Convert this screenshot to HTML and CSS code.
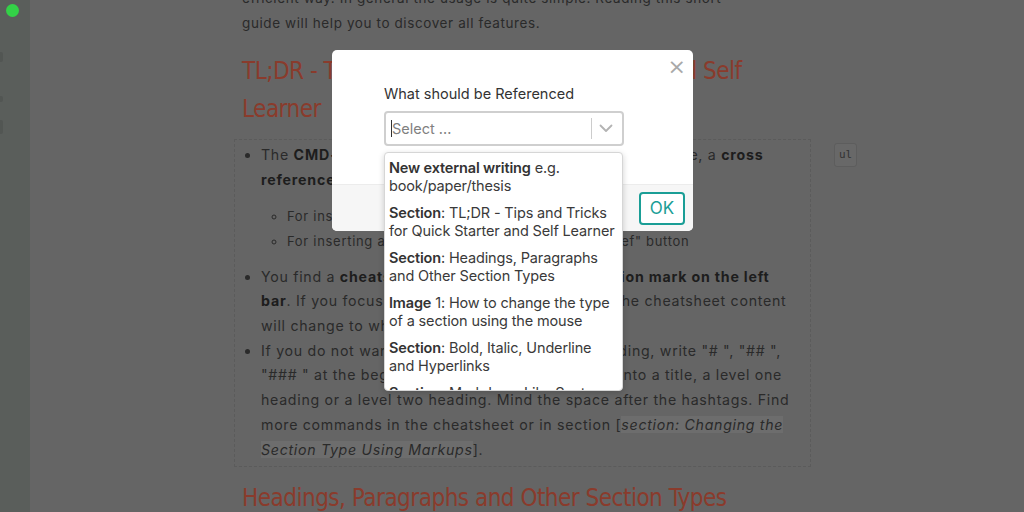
FILE: index.html
```html
<!DOCTYPE html>
<html lang="en">
<head>
<meta charset="utf-8">
<title>Editor - Insert Reference</title>
<link rel="stylesheet" href="styles.css">
</head>
<body>
<div class="app">
  <aside class="sidebar">
    <span class="status-dot"></span>
    <span class="side-mark m1"></span>
    <span class="side-mark m2"></span>
    <span class="side-mark m3"></span>
  </aside>
  <main class="main">
    <div class="doc">
      <p class="intro">efficient way. In general the usage is quite simple. Reading this short guide will help you to discover all features.</p>
      <h2 class="sec-title">TL;DR - Tips and Tricks for Quick Starter and Self Learner</h2>
      <div class="block-row">
        <div class="block">
          <ul class="bullets">
            <li>The <b>CMD+R</b> shortcut opens the dialog to insert a reference, a <b>cross reference</b> or a reference to a <b>book, paper, article</b>.
              <ul class="sub">
                <li>For inserting a cross reference use the "link" button</li>
                <li>For inserting a literature reference just use the "ref" button</li>
              </ul>
            </li>
            <li>You find a <b>cheatsheet behind the greyish question mark on the left bar</b>. If you focus on a specific section of a type the cheatsheet content will change to what is relevant for it.</li>
            <li>If you do not want to use the mouse to get a heading, write "# ", "## ", "### " at the beginning of a paragraph to turn it into a title, a level one heading or a level two heading. Mind the space after the hashtags. Find more commands in the cheatsheet or in section [<i class="xref">section: Changing the Section Type Using Markups</i>].</li>
          </ul>
        </div>
        <span class="type-badge">ul</span>
      </div>
      <h2 class="sec-title">Headings, Paragraphs and Other Section Types</h2>
    </div>
  </main>
</div>

<div class="modal">
  <button class="close" aria-label="Close">&#215;</button>
  <div class="modal-body">
    <label class="field-label">What should be Referenced</label>
    <div class="select">
      <span class="caret"></span><span class="placeholder">Select ...</span>
      <span class="sep"></span>
      <svg class="chev" width="14" height="9" viewBox="0 0 14 9"><path d="M1.5 1.5 L7 7 L12.5 1.5" fill="none" stroke="#b3b3b3" stroke-width="1.8" stroke-linecap="round" stroke-linejoin="round"/></svg>
    </div>
  </div>
  <div class="modal-footer">
    <button class="ok">OK</button>
  </div>
  <div class="menu">
    <div class="opt"><b>New external writing</b> e.g. book/paper/thesis</div>
    <div class="opt"><b>Section</b>: TL;DR - Tips and Tricks for Quick Starter and Self Learner</div>
    <div class="opt"><b>Section</b>: Headings, Paragraphs and Other Section Types</div>
    <div class="opt"><b>Image</b> 1: How to change the type of a section using the mouse</div>
    <div class="opt"><b>Section</b>: Bold, Italic, Underline and Hyperlinks</div>
    <div class="opt"><b>Section</b>: Markdown Like Syntax</div>
  </div>
</div>
</body>
</html>
```
FILE: styles.css
```css
* { box-sizing: border-box; }
html, body { margin: 0; height: 100%; overflow: hidden; }
body { font-family: Inter, "Open Sans", sans-serif; background: #656565; }

.app { display: flex; height: 512px; }
.sidebar { width: 30px; flex: none; background: #5a5e5b; position: relative; }
.status-dot { position: absolute; left: 6px; top: 4px; width: 13px; height: 13px; border-radius: 50%; background: #33d147; }
.side-mark { position: absolute; left: 0; width: 3px; background: #525653; border-radius: 0 2px 2px 0; }
.m1 { top: 52px; height: 10px; }
.m2 { top: 96px; height: 6px; }
.m3 { top: 120px; height: 14px; }

.main { flex: 1; padding-left: 212px; }
.doc { width: 570px; margin-top: -14px; }

.intro { margin: 0; width: 500px; font-size: 13.5px; line-height: 24.6px; letter-spacing: 0.6px; color: #2a2a2a; }

.sec-title {
  margin: 17px 0 11px;
  font-family: "DejaVu Sans Condensed", "DejaVu Sans", sans-serif;
  font-weight: normal; font-size: 24px; line-height: 38px; letter-spacing: -0.5px;
  color: #8a3b2c; width: 530px;
}

.block-row { display: flex; align-items: flex-start; gap: 23px; width: 624px; margin-left: -8px; }
.block { width: 577px; flex: none; border: 1px dashed #5b5b5b; padding: 3px 12px 4px 8px; }
.bullets { margin: 0; padding-left: 18px; font-size: 14.2px; line-height: 24.7px; letter-spacing: 0.7px; color: #2a2a2a; }
.bullets b { color: #1d1d1d; font-weight: 700; letter-spacing: 0.8px; }
.sub { margin: 11px 0 11px; padding-left: 26px; list-style: circle; font-size: 13px; line-height: 25px; letter-spacing: 0.7px; }
.xref { background: #6d6d6d; color: #2a2a2a; }
.type-badge { margin-top: 4px; font-family: "DejaVu Sans Mono", monospace; font-size: 11px; color: #333; background: #686868; border: 1px solid #5d5d5d; border-radius: 3px; padding: 5px 4px; line-height: 12px; }

.block-row + .sec-title { margin-top: 12px; }

/* modal */
.modal {
  position: absolute; left: 332px; top: 50px; width: 361px; height: 181px;
  background: #fff; border-radius: 5px; display: flex; flex-direction: column;
  font-family: Inter, "Open Sans", sans-serif; color: #333;
}
.close { position: absolute; right: 7px; top: 4px; border: 0; background: none; font-family: "DejaVu Sans", sans-serif; font-size: 22px; color: #a9a9a9; padding: 0; line-height: 26px; }
.modal-body { flex: 1; padding: 35px 69px 0 52px; }
.field-label { display: block; font-size: 14.5px; line-height: 18px; color: #333; margin-bottom: 8px; }
.select { height: 35px; border: 2px solid #cfcfcf; border-radius: 4px; display: flex; align-items: center; padding-left: 5px; }
.caret { width: 1px; height: 17px; background: #333; }
.placeholder { font-size: 14.5px; color: #808080; flex: 1; }
.sep { width: 1px; height: 21px; background: #cccccc; }
.chev { margin: 0 9px 0 7px; }
.modal-footer { height: 47px; background: #f6f6f6; border-top: 1px solid #ececec; border-radius: 0 0 5px 5px; display: flex; justify-content: flex-end; align-items: center; padding-right: 8px; }
.ok { width: 46px; height: 33px; border: 2px solid #1a9e96; border-radius: 4px; background: #fff; color: #1a9e96; font-family: Inter, sans-serif; font-size: 17px; padding: 0; }

.menu {
  position: absolute; left: 52px; top: 102px; width: 239px; height: 239px; overflow: hidden;
  background: #fff; border: 1px solid #d6d6d6; border-radius: 4px; padding-top: 1px;
  box-shadow: 0 2px 6px rgba(0,0,0,0.18);
}
.opt { padding: 5px 3px 5px 4px; font-size: 14.5px; line-height: 17.5px; letter-spacing: -0.15px; color: #3a3a3a; }
.opt b { font-weight: 600; color: #333; }
```
